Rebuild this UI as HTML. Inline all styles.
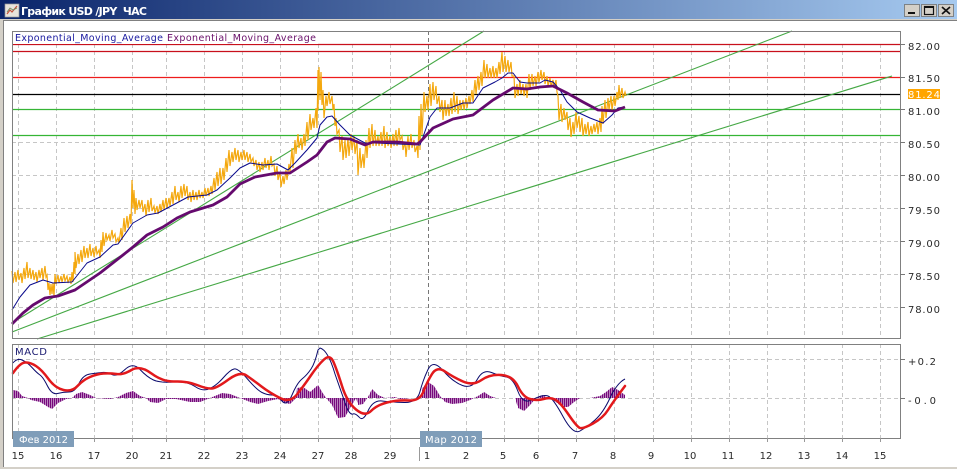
<!DOCTYPE html>
<html><head><meta charset="utf-8"><style>
html,body{margin:0;padding:0;background:#fff;width:957px;height:469px;overflow:hidden}
svg{display:block}
text{font-family:"DejaVu Sans","Liberation Sans",sans-serif;font-size:10px;fill:#2a2a2a}
.t{text-anchor:middle}
</style></head><body>
<svg width="957" height="469" viewBox="0 0 957 469" xmlns="http://www.w3.org/2000/svg">
<defs>
<linearGradient id="tb" x1="0" x2="1" y1="0" y2="0"><stop offset="0" stop-color="#0a246a"/><stop offset="1" stop-color="#a6caf0"/></linearGradient>
<pattern id="st" width="2" height="4" patternUnits="userSpaceOnUse"><rect width="1.5" height="4" fill="#76097c"/></pattern>
</defs>
<rect width="957" height="469" fill="#fff"/>
<rect width="957" height="19" fill="url(#tb)"/>
<rect y="19" width="957" height="2" fill="#d4d0c8"/>
<rect y="19" width="3" height="450" fill="#d4d0c8"/>
<rect x="3" y="20" width="1" height="447" fill="#808080"/>
<rect x="3" y="20" width="954" height="1" fill="#808080"/>
<rect y="467" width="957" height="2" fill="#d4d0c8"/>
<!-- title icon -->
<rect x="5" y="4" width="14" height="13" fill="#e8e4dc" stroke="#9a9a9a" stroke-width=".7"/>
<path d="M7 14L10 10L12 12L17 6" fill="none" stroke="#c8503c" stroke-width="1.2"/>
<path d="M7 12L10 8L13 10L17 8" fill="none" stroke="#6a8a5a" stroke-width=".8"/>
<text x="21" y="15" textLength="126" lengthAdjust="spacing" style="font-family:'DejaVu Sans',sans-serif;font-weight:bold;font-size:11px;fill:#fff">График USD /JPY&#160;&#160;ЧАС</text>
<!-- buttons -->
<g fill="#d4d0c8" stroke="#707070" stroke-width=".8">
<rect x="904.500" y="4.500" width="15" height="12"/><rect x="921.500" y="4.500" width="15" height="12"/><rect x="938.500" y="4.500" width="15" height="12"/></g>
<rect x="908" y="12" width="7" height="2" fill="#111"/>
<rect x="924.500" y="6.500" width="9" height="8" fill="none" stroke="#111" stroke-width="1.2"/>
<rect x="924" y="6" width="10" height="2" fill="#111"/>
<path d="M942 7L950 14M950 7L942 14" stroke="#111" stroke-width="1.7"/>
<!-- grid -->
<g stroke="#c6c6c6" stroke-width="1" stroke-dasharray="4 3" fill="none" shape-rendering="crispEdges">
<path d="M18.500 44V338M56.500 44V338M94.500 44V338M132.500 44V338M166.500 44V338M204.500 44V338M242.500 44V338M280.500 44V338M318.500 44V338M352.500 44V338M390.500 44V338M466.500 44V338M504.500 44V338M538.500 44V338M576.500 44V338M614.500 44V338M653.500 44V338M691.500 44V338M729.500 44V338M767.500 44V338M804.500 44V338M842.500 44V338M880.500 44V338"/>
<path d="M12 142.500H900M12 175.500H900M12 208.500H900M12 241.500H900M12 274.500H900M12 307.500H900"/>
<path d="M18.500 344V438M56.500 344V438M94.500 344V438M132.500 344V438M166.500 344V438M204.500 344V438M242.500 344V438M280.500 344V438M318.500 344V438M352.500 344V438M390.500 344V438M466.500 344V438M504.500 344V438M538.500 344V438M576.500 344V438M614.500 344V438M653.500 344V438M691.500 344V438M729.500 344V438M767.500 344V438M804.500 344V438M842.500 344V438M880.500 344V438"/>
<path d="M12 359.500H900M12 398.500H900"/>
</g>
<path d="M428.500 31V338M428.500 344V438" stroke="#777" stroke-dasharray="4 3" shape-rendering="crispEdges" fill="none"/>
<!-- horizontal levels -->
<g fill="none" stroke-width="1.3">
<path d="M12 44.500H900M12 51.500H900" stroke="#c8101c"/>
<path d="M12 77.500H900" stroke="#ee1c1c"/>
<path d="M12 94.500H900" stroke="#000"/>
<path d="M12 109.500H900M12 135.500H900" stroke="#35b535"/>
</g>
<!-- trend lines -->
<g fill="none" stroke="#45a845" stroke-width="1.1">
<path d="M12 323L484 31"/>
<path d="M12 332L792 31"/>
<path d="M37 339L892 76"/>
</g>
<!-- price -->
<path fill="none" stroke="#f4a80e" stroke-width="1.2" d="M12 271L13 283L15 272L16 282L18 270L19 280L21 273L22 283L24 268L25 279L27 262L28 278L30 268L31 279L33 270L34 280L36 272L37 282L39 270L40 278L42 268L43 280L45 266L46 277L47 275L48 290L49 283L50 295L51 284L52 294L53 283L54 296L55 274L56 284L58 275L59 283L61 276L62 282L64 274L65 281L67 276L68 283L70 277L71 284L72 272L73 282L74 262L75 274L75 252L76 268L78 254L79 264L81 250L82 262L84 246L85 258L87 248L88 258L90 244L91 256L93 248L94 257L96 246L97 254L99 250L100 258L101 240L102 252L103 232L104 246L106 233L107 240L109 235L110 241L112 230L113 238L115 234L116 242L118 238L119 243L121 228L122 240L124 218L125 232L127 216L128 228L130 214L131 224L132 180L133 208L134 190L135 214L136 198L137 210L139 200L140 208L142 200L143 212L145 204L146 216L148 200L149 212L151 198L152 211L154 206L155 213L157 206L158 214L160 204L161 212L163 200L164 210L166 198L167 208L169 198L170 206L172 192L173 204L175 186L176 200L178 192L179 202L181 186L182 198L184 184L185 196L187 186L188 200L190 192L191 202L193 190L194 200L196 192L197 200L199 190L200 198L202 192L203 198L205 188L206 196L208 188L209 196L211 186L212 194L214 178L215 190L217 172L218 186L220 168L221 184L223 168L224 180L226 158L227 172L229 150L230 166L232 152L233 162L235 148L236 160L238 150L239 162L241 152L242 160L244 150L245 160L247 152L248 162L250 154L251 162L253 158L254 166L256 160L257 170L259 162L260 172L262 162L263 170L265 158L266 168L268 160L269 170L271 156L272 166L274 164L275 176L277 166L278 180L280 172L281 187L283 176L284 184L286 170L287 180L289 164L290 172L292 148L293 168L295 140L296 154L298 134L299 148L301 138L302 150L304 134L305 146L307 122L308 140L310 114L311 130L313 118L314 128L316 108L317 128L318 70L318 110L319 67L320 100L321 72L322 105L323 90L324 118L326 96L327 106L329 92L330 104L332 96L333 110L334 104L335 126L336 118L337 134L339 130L340 152L342 136L343 160L345 140L346 158L348 138L349 156L351 134L352 150L354 136L355 154L357 140L358 175L360 148L361 168L363 154L364 168L366 140L367 158L369 128L370 148L372 124L373 146L375 130L376 146L378 136L379 146L381 132L382 146L384 126L385 148L387 132L388 146L390 136L391 148L393 134L394 146L396 130L397 146L399 128L400 140L402 136L403 150L405 142L406 157L408 136L409 150L411 134L412 148L414 140L415 152L417 146L418 158L419 116L420 150L421 104L422 135L424 92L425 112L427 96L428 110L430 84L431 106L433 82L434 100L436 86L437 104L439 96L440 112L442 100L443 120L445 100L446 116L448 104L449 116L451 98L452 114L454 92L455 112L457 96L458 114L460 100L461 110L463 100L464 110L466 98L467 108L469 96L470 104L472 90L473 102L475 80L476 94L478 76L479 90L481 72L482 86L484 60L485 78L487 64L488 78L490 68L491 78L493 66L494 78L496 68L497 78L499 62L500 74L502 52L503 72L505 56L506 72L508 60L509 72L511 62L512 76L514 76L515 98L517 84L518 96L520 80L521 94L523 84L524 96L526 84L527 98L529 74L530 90L532 74L533 86L535 76L536 86L538 72L539 82L541 70L542 80L544 72L545 84L547 76L548 86L550 78L551 86L553 80L554 88L556 80L557 92L558 96L559 120L561 104L562 122L564 108L565 120L567 112L568 130L570 118L571 137L573 122L574 134L576 112L577 128L579 116L580 132L582 118L583 136L585 124L586 134L588 122L589 136L591 126L592 134L594 124L595 132L597 122L598 134L600 118L601 132L602 106L603 124L605 100L606 118L608 98L609 110L611 96L612 110L614 96L615 106L617 92L618 100L619 85L620 98L622 88L623 98L625 92L626 96"/>
<!-- blue ema -->
<polyline fill="none" stroke="#0a0a8c" stroke-width="1" stroke-linejoin="round" points="12,310 20,297 30,285 43,280 53,283 72,282 87,263 100,257 113,245 118,244 133,223 147,215 158,213 173,205 188,197 207,195 217,190 230,178 240,168 250,163 263,165 277,164 288,170 295,163 307,150 317,138 320,125 327,117 332,116 340,125 350,135 365,143 375,143 420,145 423,137 430,117 437,108 450,108 463,103 473,103 483,88 495,82 502,78 508,73 513,73 520,82 527,83 540,83 545,80 553,82 560,90 567,102 577,112 590,118 603,123 612,115 618,108 624,107"/>
<!-- purple ema -->
<polyline fill="none" stroke="#650a6e" stroke-width="2.800" stroke-linejoin="round" points="12,324 23,313 33,305 45,298 58,296 75,290 100,273 123,255 133,247 147,235 163,227 177,218 190,212 213,205 227,197 240,184 255,177 277,173 290,173 307,162 317,155 327,142 335,138 350,139 365,145 373,142 397,142 417,144 420,142 433,128 453,119 473,115 493,100 513,88 527,89 540,87 553,86 567,93 583,102 598,110 615,111 625,107"/>
<!-- legend -->
<rect x="13" y="32" width="305" height="12" fill="#fff"/>
<text x="15" y="41" textLength="148" lengthAdjust="spacing" style="font-size:9.500px;fill:#1a1aa0">Exponential_Moving_Average</text>
<text x="167" y="41" textLength="149" lengthAdjust="spacing" style="font-size:9.500px;fill:#6a106a">Exponential_Moving_Average</text>
<!-- histogram -->
<polygon fill="url(#st)" points="12,398 13,390 18,391 22,396 28,398 31,400 40,402 48,407 52,409 58,403 66,399 72,398 76,394 82,392 90,395 96,398 110,399 118,397 126,393 133,391 140,396 146,398 150,402 158,403 166,399 176,399 190,402 200,402 210,398 222,393 230,394 240,398 250,402 258,404 268,401 278,399 285,403 290,404 296,398 297,388 303,387 310,392 318,385 322,392 326,398 332,405 338,418 345,417 350,408 356,398 358,405 363,404 368,397 372,389 378,395 385,398 395,397 400,399 412,398 420,398 423,387 428,382 434,386 440,396 445,402 452,404 462,403 470,400 478,396 484,392 490,396 496,398 515,398 518,408 524,411 530,405 536,398 542,395 548,398 556,402 562,407 568,407 574,402 580,398 590,398 600,396 606,392 612,387 618,390 625,395 625,398"/>
<!-- macd lines -->
<path fill="none" stroke="#0a0a6c" stroke-width="1" d="M13 363Q17 358 22 360Q27 362 32 367.500Q37 373 40 375Q43 377 47.500 386Q52 395 57.500 393.500Q63 392 69 392Q75 392 79 383.500Q83 375 90 374Q97 373 102 372.500Q107 372 112 374.500Q117 377 125 369.500Q133 362 140 369.500Q147 377 153.500 380Q160 383 173.500 382Q187 381 195 386.500Q203 392 210 388.500Q217 385 223.500 377.500Q230 370 234 369Q238 368 247.500 379Q257 390 262 392.500Q267 395 272 395Q277 395 282 401Q287 407 292 395Q297 383 302 379Q307 375 311 369Q315 363 318 350L320 348Q328 350 335 374Q343 397 347 408Q350 415 353 414Q355 413 359 417Q363 422 368 411Q373 400 382 401Q390 402 404 402.500Q417 403 420 391.500Q423 380 428 369.500Q433 359 443 370.500Q453 382 462.500 385.500Q472 389 477.500 379Q483 369 491.500 372.500Q500 376 506.500 377Q513 378 518 391.500Q523 405 533 399.500Q543 394 548 396Q553 398 563 416.500Q573 435 580 431Q587 427 595 420Q603 413 610 398Q617 383 625 379"/>
<path fill="none" stroke="#e2191c" stroke-width="2.500" stroke-linecap="round" d="M13 373Q20 363 25 362.500Q30 362 36 366Q42 370 48.500 379Q55 388 63.500 390Q72 392 77.500 386Q83 380 90 377Q97 374 103.500 373.500Q110 373 116.500 374Q123 375 131.500 370Q140 365 151.500 373.500Q163 382 175 381.500Q187 381 197 385Q207 389 212 388.500Q217 388 228.500 379.500Q240 371 246.500 375.500Q253 380 261.500 386.500Q270 393 280 398Q290 403 296.500 395Q303 387 310.500 376Q318 365 324 359.500Q330 354 333.500 362Q337 370 342 386Q347 402 356 409.500Q365 417 371 411Q377 405 387 402.500Q397 400 408.500 400.500Q420 401 423.500 391.500Q427 382 432 374Q437 366 445 371.500Q453 377 463 381.500Q473 386 481.500 380Q490 374 501.500 375Q513 376 518 386.500Q523 397 530 399Q537 401 543.500 399Q550 397 555 399.500Q560 402 568.500 414.500Q577 427 580 428Q583 429 593 423.500Q603 418 608 410Q613 402 625 386"/>
<!-- frames -->
<rect x="12.500" y="31.500" width="888" height="307" fill="none" stroke="#808080" shape-rendering="crispEdges"/>
<rect x="12.500" y="344.500" width="888" height="94" fill="none" stroke="#808080" shape-rendering="crispEdges"/>
<!-- ticks -->
<path d="M900 44.500H905M900 77.500H905M900 109.500H905M900 142.500H905M900 175.500H905M900 208.500H905M900 241.500H905M900 274.500H905M900 307.500H905M900 359.500H905M900 398.500H905" stroke="#777" shape-rendering="crispEdges"/>
<path d="M18.500 438V442M56.500 438V442M94.500 438V442M132.500 438V442M166.500 438V442M204.500 438V442M242.500 438V442M280.500 438V442M318.500 438V442M352.500 438V442M390.500 438V442M428.500 438V442M466.500 438V442M504.500 438V442M538.500 438V442M576.500 438V442M614.500 438V442M653.500 438V442M691.500 438V442M729.500 438V442M767.500 438V442M804.500 438V442M842.500 438V442M880.500 438V442M419.500 447V461" stroke="#999" shape-rendering="crispEdges"/>
<!-- price labels -->
<g>
<text x="908" y="50" textLength="32">82.00</text>
<text x="908" y="82" textLength="32">81.50</text>
<text x="908" y="115" textLength="32">81.00</text>
<text x="908" y="148" textLength="32">80.50</text>
<text x="908" y="181" textLength="32">80.00</text>
<text x="908" y="214" textLength="32">79.50</text>
<text x="908" y="247" textLength="32">79.00</text>
<text x="908" y="280" textLength="32">78.50</text>
<text x="908" y="313" textLength="32">78.00</text>
<text x="908" y="365" textLength="28">+0.2</text>
<text x="908" y="404" textLength="28">-0.0</text>
</g>
<rect x="908" y="89" width="32" height="10" fill="#ffa500"/>
<text x="908" y="98" textLength="32" style="fill:#fff">81.24</text>
<text x="15" y="355" textLength="32" lengthAdjust="spacing" style="fill:#1a1a70">MACD</text>
<!-- date flags -->
<rect x="13" y="431" width="61" height="16" fill="#7f9db9"/>
<text x="19" y="443" textLength="49" style="fill:#fff">Фев 2012</text>
<rect x="420" y="431" width="62" height="16" fill="#7f9db9"/>
<text x="425" y="443" textLength="52" style="fill:#fff">Мар 2012</text>
<!-- day labels -->
<g>
<text class="t" x="18" y="459">15</text><text class="t" x="56" y="459">16</text><text class="t" x="94" y="459">17</text><text class="t" x="132" y="459">20</text><text class="t" x="166" y="459">21</text><text class="t" x="204" y="459">22</text><text class="t" x="242" y="459">23</text><text class="t" x="280" y="459">24</text><text class="t" x="318" y="459">27</text><text class="t" x="351" y="459">28</text><text class="t" x="390" y="459">29</text><text class="t" x="427" y="459">1</text><text class="t" x="466" y="459">2</text><text class="t" x="503" y="459">5</text><text class="t" x="536" y="459">6</text><text class="t" x="575" y="459">7</text><text class="t" x="613" y="459">8</text><text class="t" x="651" y="459">9</text><text class="t" x="690" y="459">10</text><text class="t" x="728" y="459">11</text><text class="t" x="766" y="459">12</text><text class="t" x="804" y="459">13</text><text class="t" x="842" y="459">14</text><text class="t" x="880" y="459">15</text>
</g>
</svg>
</body></html>
